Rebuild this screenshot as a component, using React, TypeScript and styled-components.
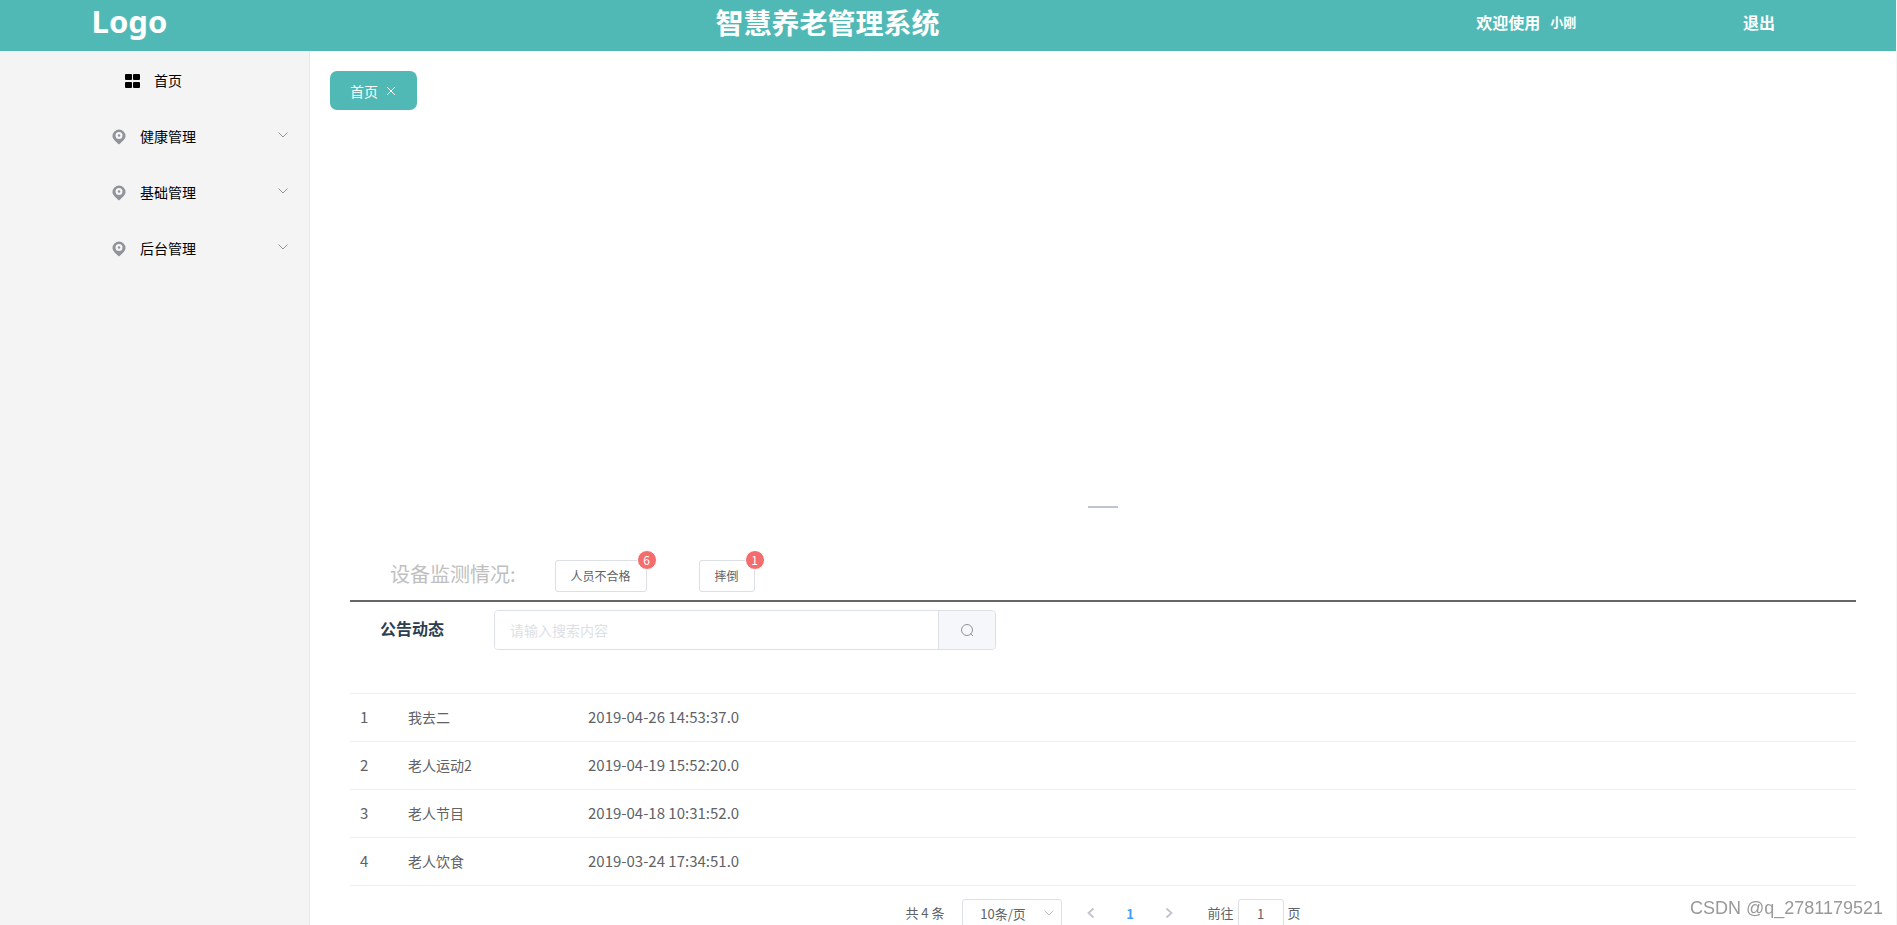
import React, { useState } from "react";
import styled, { createGlobalStyle } from "styled-components";

const GlobalStyle = createGlobalStyle`
  *, *::before, *::after { box-sizing: border-box; }
  body {
    margin: 0;
    color: #2c3e50;
    background: #fff;
    font-family: "Noto Sans CJK SC", "Noto Sans", sans-serif;
    font-size: 14px;
  }
  button, input, select { font-family: inherit; margin: 0; }
`;

const Page = styled.div`
  display: flex;
  flex-direction: column;
  height: 100vh;
  overflow: hidden;
  border-right: 1px solid #f5f5f5;
`;

const Header = styled.header`
  display: grid;
  grid-template-columns: 259fr 1138fr 260fr 206fr 34fr;
  flex: none;
  height: 51px;
  padding-bottom: 8px;
  align-items: center;
  justify-items: center;
  background: #51b9b5;
  color: #fff;
  font-weight: 700;
`;

const Logo = styled.div`
  font-family: "Noto Sans", sans-serif;
  font-size: 31px;
  line-height: 43px;
`;

const Title = styled.h1`
  margin: 0;
  padding-top: 2px;
  font-size: 28px;
  line-height: 41px;
`;

const Welcome = styled.div`
  display: flex;
  align-items: center;
  gap: 10px;
  font-size: 16px;
  line-height: 24px;
`;

const UserName = styled.span`
  font-size: 13px;
`;

const Logout = styled.button`
  padding: 0;
  border: 0;
  background: none;
  color: #fff;
  font-size: 16px;
  font-weight: 700;
  line-height: 24px;
`;

const Body = styled.div`
  display: flex;
  flex: 1;
  min-height: 0;
`;

const Sidebar = styled.nav`
  flex: none;
  width: 310px;
  padding-top: 2px;
  border-right: 1px solid #e6e6e6;
  background: #f4f4f4;
`;

const MenuItem = styled.button`
  display: grid;
  grid-template-columns: 20px 1fr 26px;
  align-items: center;
  width: 100%;
  height: 56px;
  padding: 0 21px 2px 0;
  border: 0;
  background: none;
  color: #000;
  font-size: 14px;
  line-height: 20px;
`;

const MenuLabel = styled.span`
  display: flex;
  grid-column: 2;
  align-items: center;
  justify-content: center;
  gap: 9px;
  padding-left: 21px;

  svg {
    flex: none;
    margin-top: 2px;
  }
`;

const MenuArrow = styled.span`
  display: flex;
  justify-content: flex-end;
  padding-bottom: 2px;
  color: #909399;
`;

const Main = styled.main`
  flex: 1;
  min-width: 0;
  padding: 20px;
`;

const Tab = styled.div`
  display: inline-flex;
  align-items: center;
  gap: 8px;
  height: 39px;
  padding: 1px 21px 0 20px;
  border-radius: 7px;
  background: #51b9b5;
  color: #fff;
  line-height: 20px;
`;

const TabClose = styled.button`
  display: flex;
  padding: 0;
  border: 0;
  background: none;
  color: inherit;
`;

const Content = styled.div`
  padding: 0 20px;
`;

const Carousel = styled.section`
  display: flex;
  align-items: flex-end;
  justify-content: center;
  height: 410px;
  padding-bottom: 12px;
`;

const CarouselDot = styled.button`
  width: 30px;
  height: 2px;
  padding: 0;
  border: 0;
  background: #c0c4cc;
`;

const Monitor = styled.section`
  display: flex;
  align-items: flex-end;
  height: 82px;
  padding: 0 40px 8px;
  border-bottom: 2px solid #666;
`;

const MonitorTitle = styled.h2`
  margin: 0 39px 0 0;
  color: #c0c0c0;
  font-size: 20px;
  font-weight: 400;
  line-height: 36px;
`;

const Alert = styled.div`
  position: relative;
  margin-right: 52px;
`;

const AlertButton = styled.button`
  display: block;
  height: 32px;
  padding: 0 15px 2px;
  border: 1px solid #dcdfe6;
  border-radius: 3px;
  background: #fff;
  color: #606266;
  font-size: 12px;
`;

const Badge = styled.sup`
  position: absolute;
  top: -10px;
  right: -10px;
  min-width: 20px;
  height: 20px;
  border: 1px solid #fff;
  border-radius: 10px;
  background: #f56c6c;
  color: #fff;
  font-size: 12px;
  line-height: 18px;
  text-align: center;
`;

const NoticeBar = styled.section`
  display: flex;
  padding: 8px 30px 43px;
`;

const NoticeTitle = styled.label`
  width: 114px;
  font-size: 16px;
  font-weight: 700;
  line-height: 36px;
`;

const Search = styled.form`
  display: flex;
  width: 502px;
  height: 40px;
  border: 1px solid #dcdfe6;
  border-radius: 4px;
  overflow: hidden;
`;

const SearchInput = styled.input`
  flex: 1;
  min-width: 0;
  padding: 0 15px;
  border: 0;
  outline: 0;
  color: #606266;
  font-size: 14px;

  &::placeholder { color: #dcdfe6; opacity: 1; }
`;

const SearchButton = styled.button`
  display: flex;
  align-items: center;
  justify-content: center;
  width: 57px;
  padding: 0;
  border: 0;
  border-left: 1px solid #dcdfe6;
  background: #f5f7fa;
  color: #909399;
`;

const Table = styled.table`
  width: 100%;
  border-collapse: collapse;
  border-top: 1px solid #ebeef5;
  color: #606266;
  table-layout: fixed;
`;

const Cell = styled.td<{ $width?: number; $numeric?: boolean }>`
  width: ${(p) => (p.$width ? `${p.$width}px` : "auto")};
  height: 48px;
  padding: 0 10px 2px;
  border-bottom: 1px solid #ebeef5;
  font-size: ${(p) => (p.$numeric ? 15 : 14)}px;
  line-height: 24px;
`;

const Pagination = styled.div`
  display: flex;
  align-items: center;
  justify-content: center;
  margin-top: 13px;
  color: #606266;
  font-size: 13px;
  line-height: 28px;
`;

const SizeBox = styled.span`
  position: relative;
  margin: 0 10px 0 17px;

  svg {
    position: absolute;
    top: 9px;
    right: 8px;
    color: #c0c4cc;
    pointer-events: none;
  }
`;

const SizeSelect = styled.select`
  appearance: none;
  display: block;
  width: 100px;
  height: 28px;
  padding: 0 25px 0 8px;
  border: 1px solid #dcdfe6;
  border-radius: 3px;
  background: #fff;
  color: #606266;
  font-size: 13px;
  text-align: center;
  text-align-last: center;
`;

const PageButton = styled.button<{ $active?: boolean }>`
  display: flex;
  align-items: center;
  justify-content: center;
  width: 39px;
  height: 28px;
  padding: 0;
  border: 0;
  background: none;
  color: ${(p) => (p.$active ? "#409eff" : "#c0c4cc")};
  font-size: 13px;
  font-weight: 700;
`;

const Jumper = styled.label`
  display: flex;
  gap: 4px;
  margin-left: 19px;
`;

const JumpInput = styled.input`
  width: 46px;
  height: 28px;
  border: 1px solid #dcdfe6;
  border-radius: 3px;
  color: #606266;
  font-size: 13px;
  text-align: center;
`;

const Watermark = styled.div`
  position: fixed;
  right: 14px;
  bottom: 5px;
  color: #999;
  font-family: "Liberation Sans", sans-serif;
  font-size: 18px;
  line-height: 24px;
`;

const GridIcon = () => (
  <svg width="24" height="16" viewBox="0 0 24 16" fill="currentColor" aria-hidden="true">
    <rect x="4" y="1" width="7" height="6" rx="1" />
    <rect x="12" y="1" width="7" height="6" rx="1" />
    <rect x="4" y="9" width="7" height="6" rx="1" />
    <rect x="12" y="9" width="7" height="6" rx="1" />
  </svg>
);

const PinIcon = () => (
  <svg width="24" height="16" viewBox="0 0 24 16" aria-hidden="true">
    <path d="M12 .5a6.500 6.500 0 0 1 6.500 6.500c0 3.200-3.200 5.400-6.500 8.600C8.700 12.400 5.500 10.200 5.500 7A6.500 6.500 0 0 1 12 .5z" fill="#909399" />
    <circle cx="12" cy="6.500" r="3.500" fill="#f4f4f4" />
    <circle cx="12" cy="6.500" r="1.200" fill="#909399" />
  </svg>
);

const ChevronDown = () => (
  <svg width="10" height="10" viewBox="0 0 10 10" fill="none" stroke="currentColor" aria-hidden="true">
    <path d="M.5 2.500 5 7l4.500-4.500" />
  </svg>
);

const Arrow = ({ next = false }: { next?: boolean }) => (
  <svg width="10" height="12" viewBox="0 0 10 12" fill="none" stroke="currentColor" strokeWidth="1.800" aria-hidden="true">
    <path d={next ? "M2.500 1.500 7.500 6l-5 4.500" : "M7.500 1.500 2.500 6l5 4.500"} />
  </svg>
);

const CloseIcon = () => (
  <svg width="10" height="10" viewBox="0 0 10 10" fill="none" stroke="currentColor" aria-hidden="true">
    <path d="M1 1l8 8M9 1 1 9" />
  </svg>
);

const SearchIcon = () => (
  <svg width="14" height="14" viewBox="0 0 14 14" fill="none" stroke="currentColor" aria-hidden="true">
    <circle cx="7" cy="7" r="5.500" />
    <path d="M10.500 10.500l2.500 2.500" />
  </svg>
);

const groups = ["健康管理", "基础管理", "后台管理"];

const alerts = [
  { label: "人员不合格", count: 6 },
  { label: "摔倒", count: 1 },
];

const notices = [
  { id: 1, title: "我去二", time: "2019-04-26 14:53:37.0" },
  { id: 2, title: "老人运动2", time: "2019-04-19 15:52:20.0" },
  { id: 3, title: "老人节目", time: "2019-04-18 10:31:52.0" },
  { id: 4, title: "老人饮食", time: "2019-03-24 17:34:51.0" },
];

export default function App() {
  const [keyword, setKeyword] = useState("");
  const [jump, setJump] = useState("1");

  return (
    <Page>
      <GlobalStyle />
      <Header>
        <Logo>Logo</Logo>
        <Title>智慧养老管理系统</Title>
        <Welcome>
          欢迎使用<UserName>小刚</UserName>
        </Welcome>
        <Logout type="button">退出</Logout>
      </Header>
      <Body>
        <Sidebar>
          <MenuItem type="button">
            <MenuLabel><GridIcon />首页</MenuLabel>
          </MenuItem>
          {groups.map((name) => (
            <MenuItem type="button" key={name}>
              <MenuLabel><PinIcon />{name}</MenuLabel>
              <MenuArrow><ChevronDown /></MenuArrow>
            </MenuItem>
          ))}
        </Sidebar>
        <Main>
          <Tab>
            首页
            <TabClose type="button" aria-label="关闭"><CloseIcon /></TabClose>
          </Tab>
          <Content>
            <Carousel>
              <CarouselDot type="button" aria-label="1" />
            </Carousel>
            <Monitor>
              <MonitorTitle>设备监测情况:</MonitorTitle>
              {alerts.map((a) => (
                <Alert key={a.label}>
                  <AlertButton type="button">{a.label}</AlertButton>
                  <Badge>{a.count}</Badge>
                </Alert>
              ))}
            </Monitor>
            <NoticeBar>
              <NoticeTitle htmlFor="keyword">公告动态</NoticeTitle>
              <Search onSubmit={(e) => e.preventDefault()}>
                <SearchInput
                  id="keyword"
                  placeholder="请输入搜索内容"
                  value={keyword}
                  onChange={(e) => setKeyword(e.target.value)}
                />
                <SearchButton type="submit" aria-label="搜索"><SearchIcon /></SearchButton>
              </Search>
            </NoticeBar>
            <Table>
              <tbody>
                {notices.map((n) => (
                  <tr key={n.id}>
                    <Cell $width={48} $numeric>{n.id}</Cell>
                    <Cell $width={180}>{n.title}</Cell>
                    <Cell $numeric>{n.time}</Cell>
                  </tr>
                ))}
              </tbody>
            </Table>
            <Pagination>
              <span>共 4 条</span>
              <SizeBox>
                <SizeSelect aria-label="每页条数" defaultValue="10">
                  <option value="10">10条/页</option>
                  <option value="20">20条/页</option>
                </SizeSelect>
                <ChevronDown />
              </SizeBox>
              <PageButton type="button" aria-label="上一页"><Arrow /></PageButton>
              <PageButton type="button" $active>1</PageButton>
              <PageButton type="button" aria-label="下一页"><Arrow next /></PageButton>
              <Jumper>
                前往
                <JumpInput value={jump} onChange={(e) => setJump(e.target.value)} />
                页
              </Jumper>
            </Pagination>
          </Content>
        </Main>
      </Body>
      <Watermark>CSDN @q_2781179521</Watermark>
    </Page>
  );
}
